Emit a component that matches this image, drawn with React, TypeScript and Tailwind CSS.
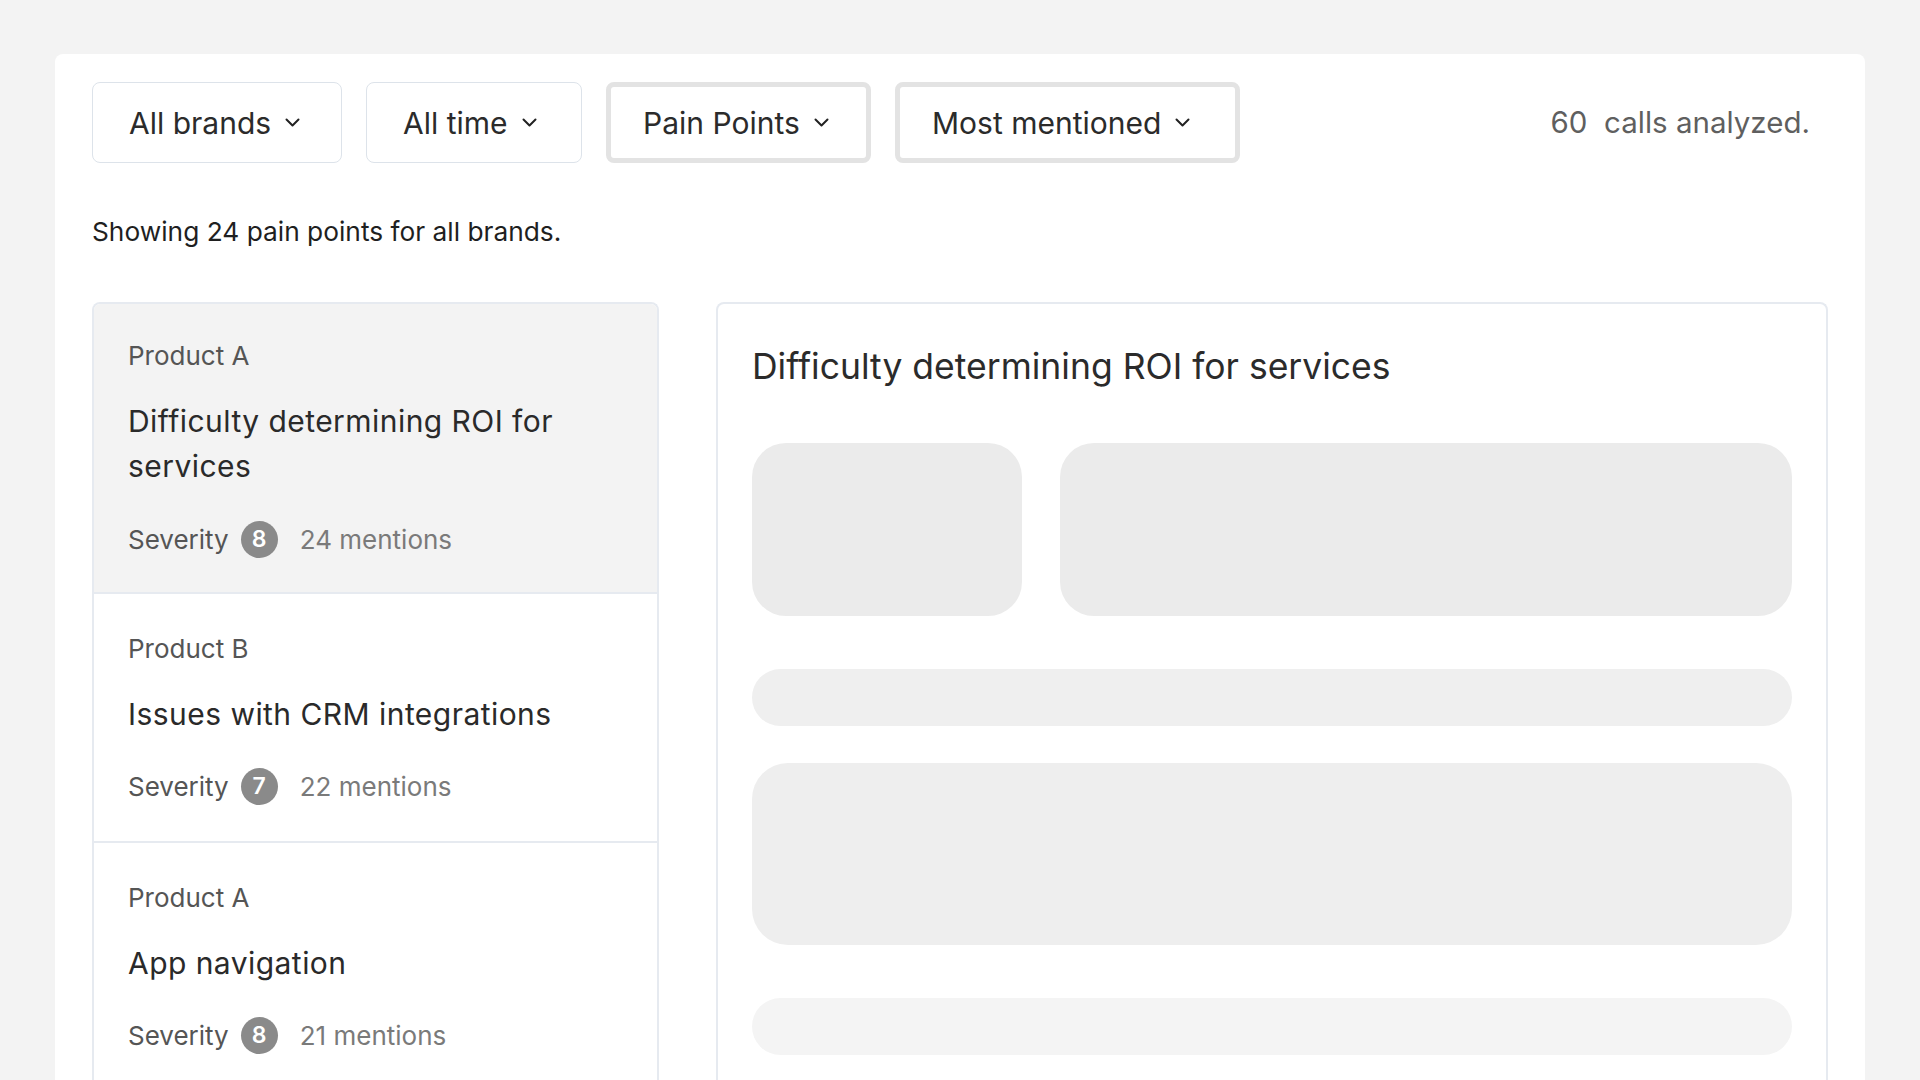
import React from 'react';

const FILTERS = [
  { label: 'All brands', width: 'w-[250px]', strong: false },
  { label: 'All time', width: 'w-[216px]', strong: false },
  { label: 'Pain Points', width: 'w-[265px]', strong: true },
  { label: 'Most mentioned', width: 'w-[345px]', strong: true },
];

const PAIN_POINTS = [
  { product: 'Product A', title: 'Difficulty determining ROI for services', severity: 8, mentions: 24 },
  { product: 'Product B', title: 'Issues with CRM integrations', severity: 7, mentions: 22 },
  { product: 'Product A', title: 'App navigation', severity: 8, mentions: 21 },
];

function Chevron() {
  return (
    <svg width="15" height="9" viewBox="0 0 15 9" fill="none" className="shrink-0">
      <polyline points="1.5,1.5 7.5,7.5 13.5,1.5" stroke="#222" strokeWidth="2" strokeLinecap="round" strokeLinejoin="round" />
    </svg>
  );
}

function FilterButton({ label, width, strong }: { label: string; width: string; strong: boolean }) {
  return (
    <button
      className={`${width} h-[81px] flex items-center gap-[14px] bg-white rounded-[8px] text-[30px] text-[#2b2b2b] ${
        strong ? 'pl-[32px] border-[5px] border-[#e3e3e3]' : 'pl-[36px] border border-[#dde3ea]'
      }`}
    >
      <span className="leading-none">{label}</span>
      <Chevron />
    </button>
  );
}

function PainPointItem({
  product,
  title,
  severity,
  mentions,
  first,
}: {
  product: string;
  title: string;
  severity: number;
  mentions: number;
  first: boolean;
}) {
  return (
    <div
      className={`px-[34px] border-b-2 border-[#e6eaf0] ${
        first ? 'bg-[#f3f3f3] pt-[37px] pb-[34px]' : 'bg-white pt-[40px] pb-[36px]'
      }`}
    >
      <div className="text-[26px] leading-[30px] text-[#555]">{product}</div>
      <div className="mt-[28px] text-[30px] leading-[45px] tracking-[0.015em] text-[#2a2a2a] pr-[30px]">{title}</div>
      <div className={`${first ? 'mt-[32px]' : 'mt-[31px]'} h-[37px] flex items-center`}>
        <span className="text-[26px] text-[#555]">Severity</span>
        <span className="ml-[12px] w-[37px] h-[37px] rounded-full bg-[#8a8a8a] text-white text-[23px] font-semibold flex items-center justify-center">
          {severity}
        </span>
        <span className="ml-[22px] text-[26px] text-[#7a7a7a]">{mentions} mentions</span>
      </div>
    </div>
  );
}

export default function App() {
  return (
    <div className="h-screen overflow-hidden bg-[#f3f3f3] pt-[54px] px-[55px] font-['Inter',sans-serif]">
      <div className="bg-white rounded-[8px] min-h-[1100px] pt-[28px] px-[37px]">
        {/* filter bar */}
        <div className="flex items-center">
          <div className="flex gap-6">
            {FILTERS.map((f) => (
              <FilterButton key={f.label} label={f.label} width={f.width} strong={f.strong} />
            ))}
          </div>
          <div className="ml-auto pr-[18px] text-[29.5px] text-[#5f5f5f] whitespace-pre">60  calls analyzed.</div>
        </div>

        <p className="mt-[53px] text-[26.3px] leading-[32px] text-[#1f1f1f]">Showing 24 pain points for all brands.</p>

        <div className="mt-[54px] flex gap-[57px] items-start">
          {/* list of pain points */}
          <div className="w-[567px] shrink-0 border-2 border-b-0 border-[#e6eaf0] rounded-t-[8px] overflow-hidden">
            {PAIN_POINTS.map((p, i) => (
              <PainPointItem key={i} {...p} first={i === 0} />
            ))}
          </div>

          {/* detail panel, still loading */}
          <div className="flex-1 border-2 border-b-0 border-[#e6eaf0] rounded-t-[8px] px-[34px] pt-[41px] h-[900px]">
            <h2 className="text-[35.5px] leading-[44px] text-[#2b2b2b]">Difficulty determining ROI for services</h2>
            <div className="mt-[54px] flex gap-[38px]">
              <div className="w-[270px] h-[173px] rounded-[34px] bg-[#ebebeb]" />
              <div className="flex-1 h-[173px] rounded-[34px] bg-[#ebebeb]" />
            </div>
            <div className="mt-[53px] h-[57px] rounded-full bg-[#efefef]" />
            <div className="mt-[37px] h-[182px] rounded-[36px] bg-[#eeeeee]" />
            <div className="mt-[53px] h-[57px] rounded-full bg-[#f4f4f4]" />
          </div>
        </div>
      </div>
    </div>
  );
}
